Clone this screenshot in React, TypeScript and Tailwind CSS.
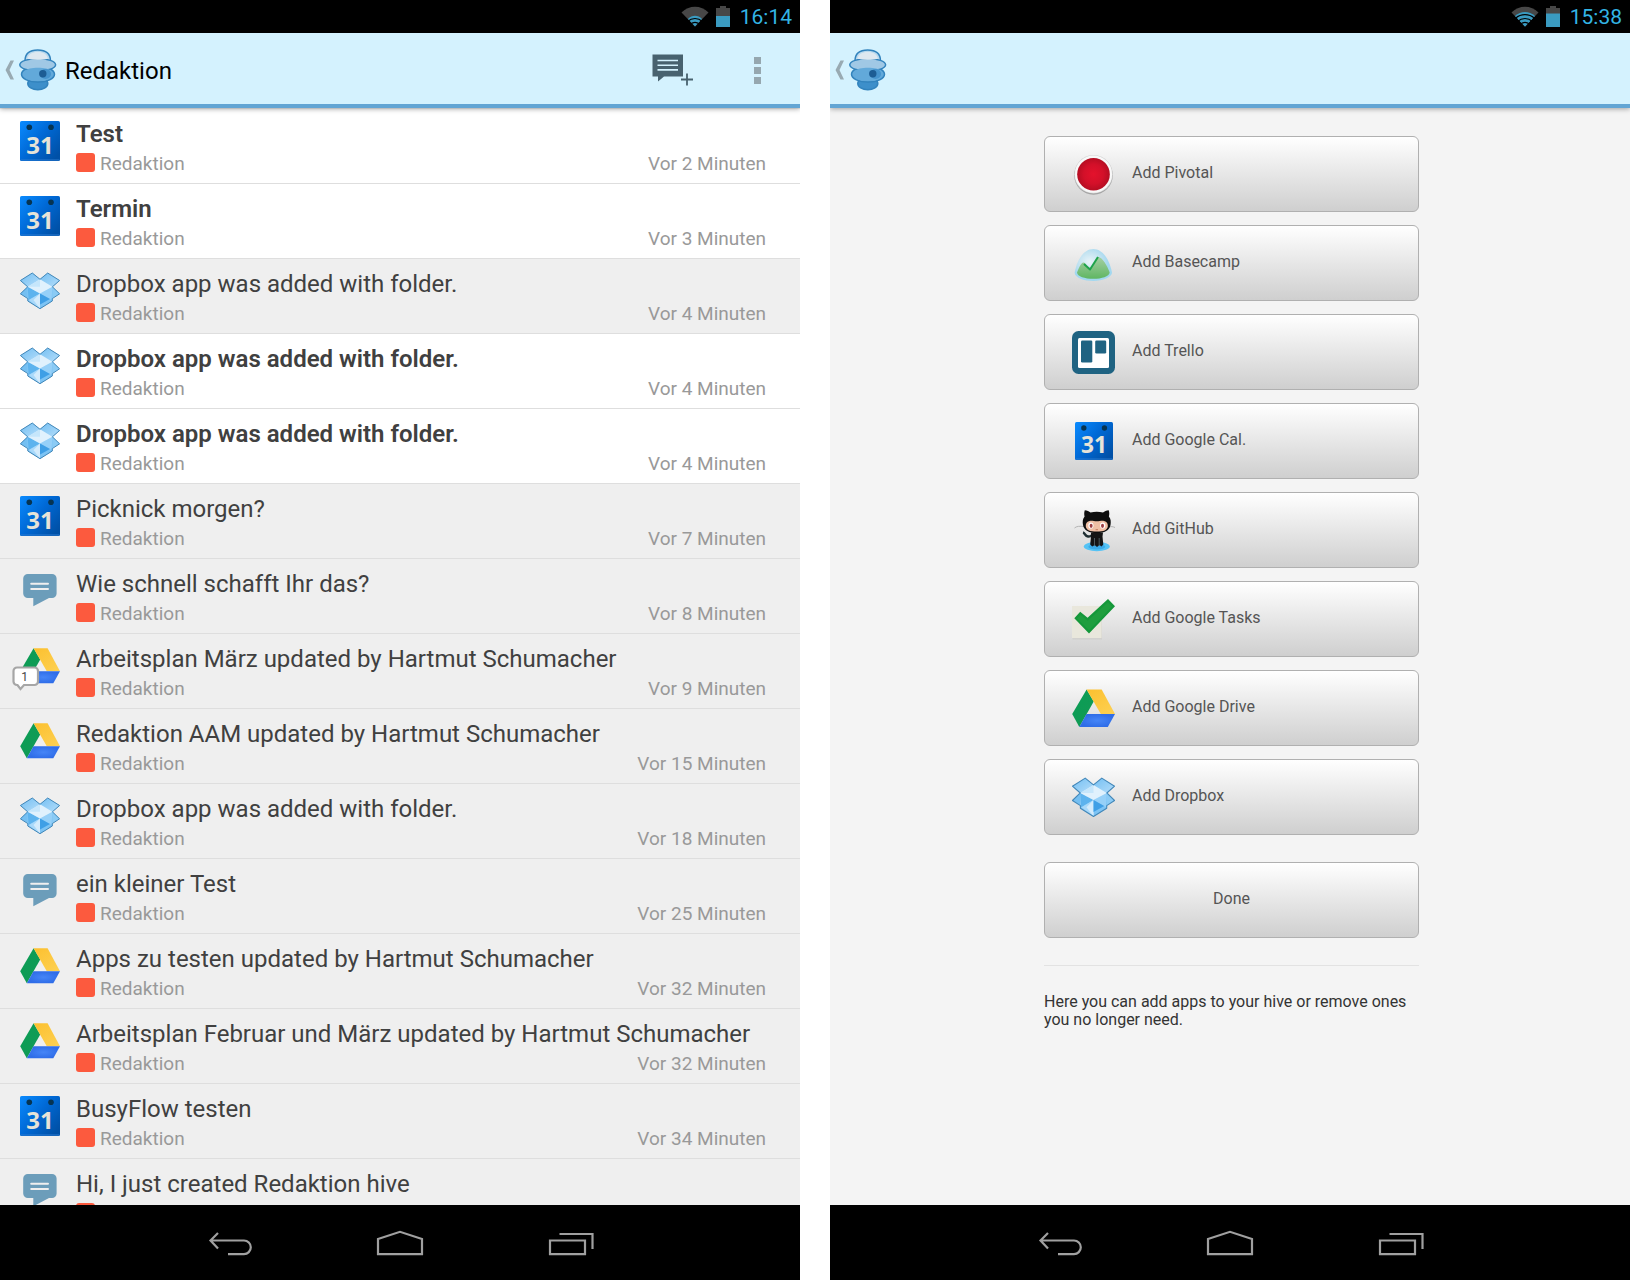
import type { ComponentType, ReactNode } from "react";

// ── Data ──────────────────────────────────────────────────────────

type Source = "calendar" | "dropbox" | "chat" | "drive";

interface FeedItem {
  title: string;
  source: Source;
  minutes: number | null;
  unread?: boolean;
  comments?: number;
}

const FEED: FeedItem[] = [
  { title: "Test", source: "calendar", minutes: 2, unread: true },
  { title: "Termin", source: "calendar", minutes: 3, unread: true },
  { title: "Dropbox app was added with folder.", source: "dropbox", minutes: 4 },
  { title: "Dropbox app was added with folder.", source: "dropbox", minutes: 4, unread: true },
  { title: "Dropbox app was added with folder.", source: "dropbox", minutes: 4, unread: true },
  { title: "Picknick morgen?", source: "calendar", minutes: 7 },
  { title: "Wie schnell schafft Ihr das?", source: "chat", minutes: 8 },
  { title: "Arbeitsplan März updated by Hartmut Schumacher", source: "drive", minutes: 9, comments: 1 },
  { title: "Redaktion AAM updated by Hartmut Schumacher", source: "drive", minutes: 15 },
  { title: "Dropbox app was added with folder.", source: "dropbox", minutes: 18 },
  { title: "ein kleiner Test", source: "chat", minutes: 25 },
  { title: "Apps zu testen updated by Hartmut Schumacher", source: "drive", minutes: 32 },
  { title: "Arbeitsplan Februar und März updated by Hartmut Schumacher", source: "drive", minutes: 32 },
  { title: "BusyFlow testen", source: "calendar", minutes: 34 },
  { title: "Hi, I just created Redaktion hive", source: "chat", minutes: null },
];

// ── App Icons ─────────────────────────────────────────────────────

interface IconProps {
  className?: string;
}

function CalendarIcon({ className }: IconProps) {
  return (
    <svg viewBox="0 0 40 40" className={className} aria-hidden="true">
      <defs>
        <linearGradient id="cal" x1="0" y1="0" x2="1" y2="0.8">
          <stop offset="0" stopColor="#0a8bff" />
          <stop offset="0.5" stopColor="#0069d6" />
          <stop offset="1" stopColor="#0050a6" />
        </linearGradient>
      </defs>
      <rect width="40" height="40" rx="1.6" fill="url(#cal)" />
      <path d="M0.5 39h39" stroke="#2a7bd0" strokeWidth="1" />
      <circle cx="9.3" cy="6.3" r="2.8" fill="#063452" />
      <circle cx="31" cy="6.3" r="2.8" fill="#063452" />
      <text
        x="20"
        y="32.5"
        textAnchor="middle"
        fontFamily="'Noto Sans', sans-serif"
        fontWeight="700"
        fontSize="24"
        fill="#e6e3d8"
      >
        31
      </text>
    </svg>
  );
}

function DropboxIcon({ className }: IconProps) {
  return (
    <svg viewBox="0 0 40 40" className={className} aria-hidden="true">
      <defs>
        <linearGradient id="flap" x1="0" y1="0" x2="1" y2="1">
          <stop offset="0" stopColor="#74bff2" />
          <stop offset="1" stopColor="#b4ddfa" />
        </linearGradient>
      </defs>
      <path
        d="M12.3 2 20 8.3 27.7 2 39.6 9.5 32.4 15.8 39.6 22.8 32.3 27.6V30L20 37.7 7.8 30v-2.4L.4 22.8l7.3-7L.4 9.5Z"
        fill="#8fd0f8"
      />
      <path d="M12.3 2 20 8.3 7.7 15.8.4 9.5Z" fill="url(#flap)" />
      <path d="M27.7 2 20 8.3l12.4 7.5 7.2-6.3Z" fill="url(#flap)" />
      <path d="M7.7 15.8 9 27.6.4 22.8Z" fill="#74bff2" />
      <path d="M32.4 15.8 31 27.6l8.6-4.800Z" fill="#8bcbf5" />
      <path d="M7.7 15.8 20 22.4v15.300L7.8 30Z" fill="#8fcdf7" />
      <path d="M32.4 15.8 20 22.4v15.300L32.300 30Z" fill="#7cc3f4" />
      <path d="M7.7 15.8 20 22.4 8.500 29Z" fill="#5db3ee" />
      <path d="M32.4 15.8 20 22.4 31.500 29Z" fill="#96d0f8" />
      <path d="M20 22.4V37.700L9 29Z" fill="#a9d9fa" />
      <path d="M20 22.4V37.7L13.500 29Z" fill="#d3ebfc" />
      <path d="M20 22.4 30 28 20 33.500Z" fill="#3f9fe6" />
      <path d="M20 8.3 32.4 15.8 20 22.4 7.7 15.8Z" fill="#e0f1fd" />
      <path d="M20 8.3V15.800H7.7Z" fill="#c6e6fb" />
      <path
        d="M12.3 2 20 8.3 27.7 2 39.6 9.5 32.4 15.8 39.6 22.8 32.3 27.6V30L20 37.7 7.8 30v-2.4L.4 22.8l7.3-7L.4 9.5Z"
        fill="none"
        stroke="#4387b8"
        strokeWidth="1"
        strokeLinejoin="round"
      />
    </svg>
  );
}

function DriveIcon({ className }: IconProps) {
  return (
    <svg viewBox="0 0 40 40" className={className} aria-hidden="true">
      <defs>
        <linearGradient id="dg" x1="0" y1="0" x2="1" y2="1">
          <stop offset="0" stopColor="#0a9d55" />
          <stop offset="1" stopColor="#129a55" />
        </linearGradient>
        <linearGradient id="dy" x1="0" y1="0" x2="0.8" y2="1">
          <stop offset="0" stopColor="#fcc02f" />
          <stop offset="1" stopColor="#fdcf4f" />
        </linearGradient>
        <radialGradient id="db">
          <stop offset="0" stopColor="#4585f7" />
          <stop offset="1" stopColor="#2f6de8" />
        </radialGradient>
      </defs>
      <path d="M13.6 2.3 20.2 13.4 6.8 37.3.2 25.2Z" fill="url(#dg)" />
      <path d="M13.6 2.3H27.6L40 25.2H26.8Z" fill="url(#dy)" />
      <path d="M13.5 25.2H40L33.3 37.3H6.8Z" fill="url(#db)" />
    </svg>
  );
}

function ChatIcon({ className }: IconProps) {
  return (
    <svg viewBox="0 0 40 40" className={className} aria-hidden="true">
      <path
        d="M8 3h24a4.6 4.6 0 0 1 4.6 4.6v14.8a4.6 4.6 0 0 1-4.6 4.600H29L13.3 35.3V27H8a4.6 4.6 0 0 1-4.8-4.6V7.6A4.6 4.6 0 0 1 8 3Z"
        fill="#6c9dba"
      />
      <path d="M11.2 12.7H28M11.2 18H28" stroke="#efefef" strokeWidth="2" strokeLinecap="round" />
    </svg>
  );
}

function PivotalIcon({ className }: IconProps) {
  return (
    <svg viewBox="0 0 43 43" className={className} aria-hidden="true">
      <defs>
        <radialGradient id="piv">
          <stop offset="0" stopColor="#e4122c" />
          <stop offset="0.6" stopColor="#d31029" />
          <stop offset="1" stopColor="#b50d22" />
        </radialGradient>
      </defs>
      <circle cx="21.5" cy="22.4" r="19.3" fill="#8c8c8c" opacity="0.7" />
      <circle cx="21.5" cy="21.3" r="19.2" fill="#d4d4d4" />
      <circle cx="21.5" cy="21.2" r="18.6" fill="#f8f8f8" />
      <circle cx="21.5" cy="21.2" r="16.3" fill="url(#piv)" />
    </svg>
  );
}

function BasecampIcon({ className }: IconProps) {
  return (
    <svg viewBox="0 0 43 43" className={className} aria-hidden="true">
      <defs>
        <radialGradient id="sky" cx="0.4" cy="0.4">
          <stop offset="0" stopColor="#e8f3f8" />
          <stop offset="0.6" stopColor="#c3e3f1" />
          <stop offset="1" stopColor="#a3d8f0" />
        </radialGradient>
        <linearGradient id="hill" x1="0" y1="0" x2="0" y2="1">
          <stop offset="0" stopColor="#a5cfa4" />
          <stop offset="1" stopColor="#5fb662" />
        </linearGradient>
      </defs>
      <path
        d="M21.3 7C31 7 37.5 18 40 30.5 40.5 35 31 39 21.3 39S2 35 2.7 30.5C5 18 11.5 7 21.3 7Z"
        fill="url(#sky)"
      />
      <path
        d="M5 30.5C7 26 9 20.500 11.5 20.500c2 0 4 5.500 7 5.500 3 0 5-10.500 8-11 3.500 0 9 9 11.200 15.500C37 34.500 30 36.800 21.300 36.800S5.500 34.500 5 30.500Z"
        fill="url(#hill)"
      />
      <path d="m12 22 6 5.5 8-12.500" fill="none" stroke="#1fa34c" strokeWidth="2" strokeLinejoin="round" />
    </svg>
  );
}

function TrelloIcon({ className }: IconProps) {
  return (
    <svg viewBox="0 0 43 43" className={className} aria-hidden="true">
      <rect width="43" height="43" rx="6.5" fill="#1f6382" />
      <rect x="6" y="7" width="31" height="30" rx="1.5" fill="#ffffff" />
      <rect x="9" y="9.5" width="11.3" height="22" rx="1.3" fill="#1f6382" />
      <rect x="23.2" y="9.5" width="11" height="13" rx="1.3" fill="#1f6382" />
    </svg>
  );
}

function GitHubIcon({ className }: IconProps) {
  return (
    <svg viewBox="0 0 43 43" className={className} aria-hidden="true">
      <ellipse cx="24.8" cy="37.5" rx="13" ry="4.7" fill="#55c3f5" />
      <ellipse cx="24.8" cy="37.8" rx="8.5" ry="2.8" fill="#3aaae8" />
      <path d="M2.5 19c2-1.8 5-2 10-1.500M43 18.5c-2-1-4-1-6-.7" fill="none" stroke="#b5b5b5" strokeWidth="1" />
      <path d="M11 23.5c2 .5 2 3.5 5 4 2 .3 3-.5 4-1.5" fill="none" stroke="#1f2f33" strokeWidth="2.4" />
      <path d="M19 23.5h12l-.5 4 .8 8-1.8 2-2-1.500-2.500 2-2.300-2-2.500 1.500-2-2 .8-8Z" fill="#141414" />
      <path d="M22.5 29v8M27.2 29v8" stroke="#5a6a70" strokeWidth="0.8" />
      <path
        d="M12.8 1.3c2.3 0 4.3 1 5.7 2.3 4-1 8.5-1 12.5 0C32.4 2.3 34.4 1.3 36.7 1.3c.9 2.5.6 4.7.2 6.2C39 10 39 13 38.5 16c-1 5.5-6 8-13.7 8S12 21.5 11 16c-.5-3-.5-6 1.6-8.5-.4-1.5-.7-3.7.2-6.2Z"
        fill="#0e0e0e"
      />
      <path
        d="M17.5 12c2.5-.5 4.5.3 7.3.3s4.8-.8 7.3-.3c3 .8 4 3 3.7 5.5-.6 3.7-4 5-11 5s-10.4-1.300-11-5c-.3-2.500.7-4.700 3.700-5.500Z"
        fill="#f0bfa4"
      />
      <ellipse cx="18.9" cy="16.5" rx="2.6" ry="3.1" fill="#ffffff" />
      <ellipse cx="30.7" cy="16.5" rx="2.6" ry="3.1" fill="#ffffff" />
      <ellipse cx="19.1" cy="16.8" rx="1.5" ry="2.1" fill="#9e3d42" />
      <ellipse cx="30.5" cy="16.8" rx="1.5" ry="2.1" fill="#9e3d42" />
      <path d="M23.6 20.7h2.4" stroke="#b5694f" strokeWidth="0.8" />
    </svg>
  );
}

function TasksIcon({ className }: IconProps) {
  return (
    <svg viewBox="0 0 43 43" className={className} aria-hidden="true">
      <rect x="0.5" y="9" width="29.5" height="32.5" fill="#c9c8c2" opacity="0.5" />
      <rect x="0" y="8" width="29.5" height="32" fill="#e9e7dc" />
      <path d="m2.300 20.300 5.900-6.600 7.400 6.100L36 1 43 8.300 17 35.500Z" fill="#15983a" />
      <path d="m5 20.400 3.500-3.700 7.200 6L36 4.200l4 4.200-23 23.800Z" fill="#1f9e3e" />
    </svg>
  );
}

const SOURCE_ICONS: Record<Source, ComponentType<IconProps>> = {
  calendar: CalendarIcon,
  dropbox: DropboxIcon,
  chat: ChatIcon,
  drive: DriveIcon,
};

const APPS: { name: string; Icon: ComponentType<IconProps>; size: string }[] = [
  { name: "Pivotal", Icon: PivotalIcon, size: "size-[43px]" },
  { name: "Basecamp", Icon: BasecampIcon, size: "size-[43px]" },
  { name: "Trello", Icon: TrelloIcon, size: "size-[43px]" },
  { name: "Google Cal.", Icon: CalendarIcon, size: "size-[38px]" },
  { name: "GitHub", Icon: GitHubIcon, size: "size-[43px]" },
  { name: "Google Tasks", Icon: TasksIcon, size: "size-[43px]" },
  { name: "Google Drive", Icon: DriveIcon, size: "size-[43px]" },
  { name: "Dropbox", Icon: DropboxIcon, size: "size-[43px]" },
];

// ── Phone Chrome ──────────────────────────────────────────────────

function HiveLogo() {
  return (
    <svg viewBox="0 0 38 42" className="h-[42px] w-[38px]" aria-hidden="true">
      <g stroke="#3283bd" strokeWidth="1.500">
        <ellipse cx="18.800" cy="34.500" rx="10" ry="6.200" fill="#3d8fca" />
        <ellipse cx="19" cy="25.300" rx="16.500" ry="7.800" fill="#62a9da" />
        <path d="M6 12C6 5 10.500 1 18.700 1S31.500 5 31.500 12Z" fill="#b9d9ee" />
        <ellipse cx="18.700" cy="15.800" rx="17.900" ry="6.300" fill="#a0c8e5" />
      </g>
      <path d="M8.500 9.800C9 5.500 13 3 18.700 3s9.700 2.500 10.200 6.800c-6 1.400-14 1.400-20.400 0Z" fill="#dfe8f0" />
      <path d="M5 22.500c3-3 8-3.800 14-3.800s11 .8 14 3.800v5c-3 3.300-8 4.600-14 4.600S8 30.800 5 27.500Z" fill="#62a9da" />
      <ellipse cx="26.500" cy="25" rx="5.500" ry="5" fill="#4593cd" />
      <circle cx="23.800" cy="24.800" r="3.700" fill="#1c5c94" />
    </svg>
  );
}

function StatusBar({ time, level }: { time: string; level: "low" | "high" }) {
  return (
    <div className="flex h-[33px] shrink-0 items-center justify-end gap-[7px] bg-black pr-2">
      <svg viewBox="0 0 28 21" className="h-[21px] w-7" aria-hidden="true">
        <path d="M0.500 6.500C8-1.300 20-1.300 27.500 6.500L14 20.500Z" fill="#474747" />
        {level === "high" && <path d="M4 10c6-5.500 14-5.500 20 0L14 20.500Z" fill="#3a9bc1" />}
        {level === "high" && (
          <path d="M4.500 12.300c5.500-4.800 13.500-4.800 19 0" fill="none" stroke="#000000" strokeWidth="1.200" />
        )}
        <path d="M7 13c4-4.200 10-4.200 14 0l-7 7.500Z" fill="#3a9bc1" />
        <path
          d="M6.500 15.500c4.500-4 10.500-4 15 0M9.500 18c3-2.300 6-2.300 9 0"
          fill="none"
          stroke="#000000"
          strokeWidth="1.200"
        />
      </svg>
      <svg viewBox="0 0 14 21" className="h-[21px] w-3.5" aria-hidden="true">
        <path d="M4 0h6v2h4v8H0V2h4Z" fill="#474747" />
        <path d={level === "high" ? "M0 7.500h14V21H0Z" : "M0 10h14v11H0Z"} fill="#3a9bc1" />
      </svg>
      <span className="pt-0.5 pl-[3px] text-[21px] leading-[31px] text-[#33b5e5]">{time}</span>
    </div>
  );
}

function ActionBar({ title, children }: { title?: string; children?: ReactNode }) {
  return (
    <header className="relative z-10 flex h-[75px] shrink-0 items-center border-b-4 border-[#62a5d4] bg-[#d4f2fe] pt-[3px] shadow-[0_1px_5px_rgba(0,0,0,0.35)]">
      <a href="#up" aria-label="Navigate up" className="flex items-center gap-[5px] pl-[5px] text-black">
        <svg viewBox="0 0 9 20" className="h-5 w-[9px]" aria-hidden="true">
          <path d="M5.500 0.500H9L4.500 10 9 19.500H5.500L0.500 10Z" fill="#98aab2" />
        </svg>
        <HiveLogo />
        {title && <h1 className="pt-0.5 pl-[3px] text-2xl">{title}</h1>}
      </a>
      <div className="ml-auto flex h-full">{children}</div>
    </header>
  );
}

function NavBar() {
  return (
    <nav className="flex h-[75px] shrink-0 justify-center bg-black pt-0.5">
      <button aria-label="Back" className="flex w-[170px] items-center justify-center">
        <svg viewBox="0 0 48 28" className="h-7 w-12" fill="none" stroke="#a0a0a0" strokeWidth="2.200" aria-hidden="true">
          <path d="M12 3 4.500 10.500l7.500 8M4.500 10.500H38a6.800 6.800 0 0 1 0 13.600H22" />
        </svg>
      </button>
      <button aria-label="Home" className="flex w-[170px] items-center justify-center">
        <svg viewBox="0 0 48 28" className="h-7 w-12" fill="none" stroke="#a0a0a0" strokeWidth="2.200" aria-hidden="true">
          <path d="M2 24.200V9L24 1.800 46 9v15.200Z" />
        </svg>
      </button>
      <button aria-label="Recent apps" className="flex w-[170px] items-center justify-center">
        <svg viewBox="0 0 48 28" className="h-7 w-12" fill="none" stroke="#a0a0a0" strokeWidth="2.200" aria-hidden="true">
          <path d="M4 10.500h35v13.700H4ZM13.500 4H46.500v15" />
        </svg>
      </button>
    </nav>
  );
}

// ── Feed ──────────────────────────────────────────────────────────

function CommentBadge({ count }: { count: number }) {
  return (
    <svg viewBox="0 0 28 26" className="absolute top-5 -left-2 h-[26px] w-7" aria-label={`${count} comments`}>
      <path
        d="M5 1.500h17.500a3.500 3.500 0 0 1 3.500 3.500v10.500a3.500 3.500 0 0 1-3.500 3.500H12l-3.500 4-3-4H5a3.500 3.500 0 0 1-3.500-3.500V5A3.500 3.500 0 0 1 5 1.500Z"
        fill="#ffffff"
        stroke="#a6a6a6"
        strokeWidth="2.200"
      />
      <text x="12.500" y="14.500" textAnchor="middle" fontFamily="Roboto, sans-serif" fontSize="12" fill="#444444">
        {count}
      </text>
    </svg>
  );
}

function FeedRow({ item }: { item: FeedItem }) {
  const Icon = SOURCE_ICONS[item.source];
  return (
    <li
      className={`flex h-[75px] shrink-0 gap-4 border-b border-[#dedede] pr-[34px] pl-5 ${
        item.unread ? "bg-white" : "bg-[#efefef]"
      }`}
    >
      <div className="relative mt-3 size-10 shrink-0">
        <Icon className="size-10" />
        {item.comments && <CommentBadge count={item.comments} />}
      </div>
      <div className="min-w-0 flex-1 pt-2.5">
        <h2
          className={`text-2xl leading-[30px] whitespace-nowrap text-[#404040] ${
            item.unread ? "font-semibold" : "font-normal"
          }`}
        >
          {item.title}
        </h2>
        <div className="flex items-start pt-[3px] text-[19px] leading-6 text-[#999999]">
          <span className="mt-px mr-[5px] size-[19px] rounded-[3px] bg-[#fc5a3e]" />
          <span>Redaktion</span>
          {item.minutes !== null && <span className="ml-auto">Vor {item.minutes} Minuten</span>}
        </div>
      </div>
    </li>
  );
}

function FeedScreen() {
  return (
    <section className="flex h-screen min-w-0 flex-col overflow-hidden">
      <StatusBar time="16:14" level="low" />
      <ActionBar title="Redaktion">
        <button aria-label="New message" className="flex w-[85px] items-center justify-center">
          <svg viewBox="0 0 42 32" className="h-8 w-[42px]" aria-hidden="true">
            <path d="M0.500 0.500H31v22H12L6 27.500V22.500H0.500Z" fill="#48626f" />
            <path d="M5.500 6.500H26M5.500 11.200H26M5.500 15.900H26" stroke="#d4f2fe" strokeWidth="1.600" />
            <path d="M35 19.500v12M29 25.500h12" stroke="#48626f" strokeWidth="1.800" />
          </svg>
        </button>
        <button aria-label="More options" className="flex w-[85px] items-center justify-center">
          <svg viewBox="0 0 7 27" className="h-[27px] w-[7px]" fill="#95a7af" aria-hidden="true">
            <path d="M0 0h7v7H0ZM0 10h7v7H0ZM0 20h7v7H0Z" />
          </svg>
        </button>
      </ActionBar>
      <ul className="flex min-h-0 flex-1 flex-col overflow-hidden bg-[#efefef] pt-px">
        {FEED.map((item, idx) => (
          <FeedRow key={idx} item={item} />
        ))}
      </ul>
      <NavBar />
    </section>
  );
}

// ── Add Apps ──────────────────────────────────────────────────────

const BUTTON_CLASS =
  "flex h-[76px] w-full items-center rounded-md border border-[#b0b0b0] bg-linear-to-b from-white to-[#cfcfcf] text-base text-[#555555]";

function AddAppsScreen() {
  return (
    <section className="flex h-screen min-w-0 flex-col overflow-hidden bg-[#f4f4f4]">
      <StatusBar time="15:38" level="high" />
      <ActionBar />
      <main className="min-h-0 flex-1 overflow-hidden pt-7 pl-[3px]">
        <div className="mx-auto w-full max-w-[375px]">
          <div className="flex flex-col gap-[13px]">
            {APPS.map(({ name, Icon, size }) => (
              <button key={name} className={`${BUTTON_CLASS} gap-[17px] pl-[27px]`}>
                <span className="flex size-[43px] items-center justify-center">
                  <Icon className={size} />
                </span>
                <span className="pb-0.5">Add {name}</span>
              </button>
            ))}
          </div>
          <button className={`${BUTTON_CLASS} mt-[27px] justify-center pb-0.5`}>Done</button>
          <hr className="mt-[27px] border-[#e2e2e2]" />
          <p className="pt-[27px] text-base leading-[18px] text-[#333333]">
            Here you can add apps to your hive or remove ones you no longer need.
          </p>
        </div>
      </main>
      <NavBar />
    </section>
  );
}

export default function App() {
  return (
    <div className="grid grid-cols-2 gap-[30px] bg-white font-['Roboto',sans-serif]">
      <FeedScreen />
      <AddAppsScreen />
    </div>
  );
}
